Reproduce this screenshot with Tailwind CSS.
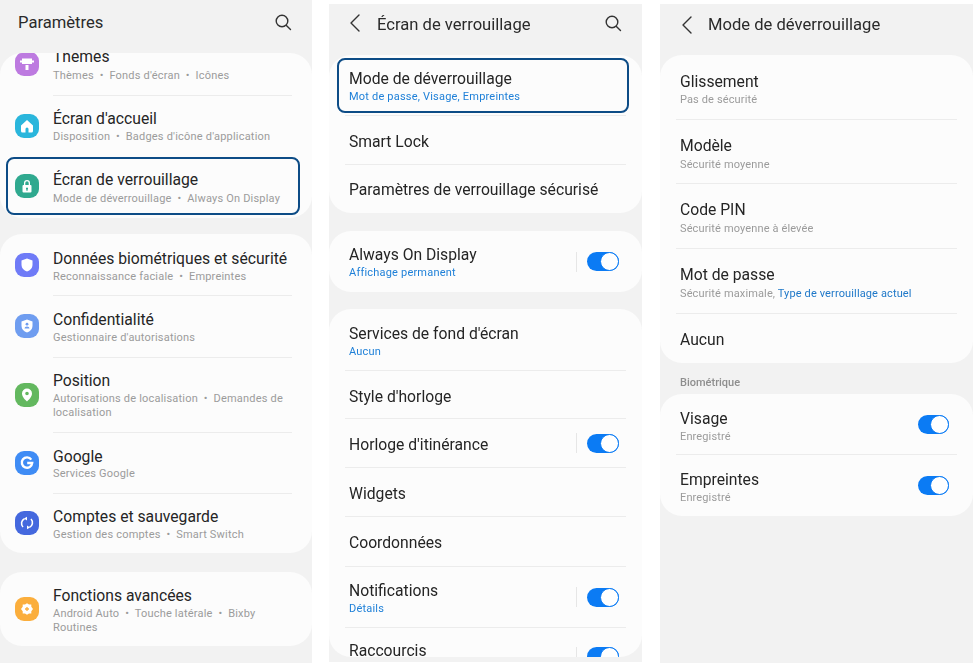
<!DOCTYPE html>
<html lang="fr">
<head>
    <meta charset="UTF-8">
    <title>Paramètres</title>
    <script src="https://cdn.jsdelivr.net/npm/@tailwindcss/browser@4"></script>
</head>
<body class="bg-white font-['Roboto',sans-serif] overflow-hidden">
<div class="flex w-[973px] h-[665px] items-start blur-[0.4px]">

    <!-- Paramètres -->
    <section class="w-[312px] h-[663px] bg-[#f2f2f2] overflow-hidden shrink-0">
        <header class="h-[53px] flex items-start justify-between pl-[18px] pr-[20px] pt-[11px]">
            <h1 class="text-[16.6px] leading-[24px] text-[#2a2a2a]">Paramètres</h1>
            <svg class="w-[18px] h-[18px] mt-[2px]" viewBox="0 0 18 18" fill="none" stroke="#333" stroke-width="1.4" stroke-linecap="round"><circle cx="8" cy="8" r="5.8"/><path d="M12.4 12.4 16.5 16.5"/></svg>
        </header>

        <div class="h-[165px] bg-[#fcfcfc] rounded-[22px] overflow-hidden">
            <div class="flex h-[42px] pl-[15px] -mt-[24px]">
                <div class="w-6 h-6 mt-[23px] mr-[14px] rounded-[9px] bg-[#bd7ae0] flex items-center justify-center shrink-0">
                    <svg class="w-4 h-4" viewBox="0 0 16 16" fill="#fff"><path d="M3 2.500h10v2H15v2h-2v1.500H3V6.500H1v-2h2zM6.500 9h3v5h-3z"/></svg>
                </div>
                <div class="flex-1 mr-[20px]"><div class="text-[15.7px] leading-[20px] text-[#252525] mt-[18px]">Thèmes</div><div class="mt-[1px] text-[11px] leading-[16px] tracking-[0.2px] text-[#9b9b9b]">Thèmes &nbsp;•&nbsp; Fonds d'écran &nbsp;•&nbsp; Icônes</div></div>
            </div>
            <div class="h-[24px]"></div>
            <div class="flex h-[62px] pl-[15px]">
                <div class="w-6 h-6 self-center mr-[14px] rounded-[9px] bg-[#2ab6dc] flex items-center justify-center shrink-0">
                    <svg class="w-4 h-4" viewBox="0 0 16 16" fill="#fff"><path fill-rule="evenodd" d="M8 2 14 7.500V13a1.500 1.500 0 0 1-1.500 1.500h-9A1.500 1.500 0 0 1 2 13V7.500zM6.500 14.500h3V11a1.500 1.500 0 0 0-3 0z"/></svg>
                </div>
                <div class="flex-1 mr-[20px] border-t border-[#ececec] pt-[13px]"><div class="text-[15.7px] leading-[20px] text-[#252525]">Écran d'accueil</div><div class="text-[11px] leading-[16px] tracking-[0.2px] text-[#9b9b9b]">Disposition &nbsp;•&nbsp; Badges d'icône d'application</div></div>
            </div>
            <div class="flex h-[58px] ml-[6px] mr-[12px] pl-[7px] border-2 border-[#0d4c86] rounded-[8px]">
                <div class="w-6 h-6 self-center mr-[14px] rounded-[9px] bg-[#2fa98f] flex items-center justify-center shrink-0">
                    <svg class="w-4 h-4" viewBox="0 0 16 16" fill="#fff"><path fill-rule="evenodd" d="M5 7V5a3 3 0 0 1 6 0v2h.5A1 1 0 0 1 12.500 8v5.500a1 1 0 0 1-1 1h-7a1 1 0 0 1-1-1V8a1 1 0 0 1 1-1zM6.300 7h3.400V5a1.700 1.700 0 0 0-3.400 0zM8 9.500a1.100 1.100 0 0 0-.6 2v1.200h1.200v-1.200a1.100 1.100 0 0 0-.6-2z"/></svg>
                </div>
                <div class="flex-1 pt-[11px]"><div class="text-[15.7px] leading-[20px] text-[#252525]">Écran de verrouillage</div><div class="mt-[1px] text-[11px] leading-[16px] tracking-[0.2px] text-[#9b9b9b]">Mode de déverrouillage &nbsp;•&nbsp; Always On Display</div></div>
            </div>
        </div>

        <div class="h-[319px] mt-[16px] bg-[#fcfcfc] rounded-[22px] overflow-hidden">
            <div class="flex h-[61px] pl-[15px]">
                <div class="w-6 h-6 self-center mr-[14px] rounded-[9px] bg-[#6f7bf7] flex items-center justify-center shrink-0">
                    <svg class="w-4 h-4" viewBox="0 0 16 16" fill="#fff"><path d="M8 1.500 13.500 3.500V8c0 3.300-2.300 5.500-5.500 6.500C4.800 13.500 2.500 11.300 2.500 8V3.500z"/></svg>
                </div>
                <div class="flex-1 mr-[20px] pt-[15px]"><div class="text-[15.7px] leading-[20px] text-[#252525] whitespace-nowrap">Données biométriques et sécurité</div><div class="text-[11px] leading-[16px] tracking-[0.2px] text-[#9b9b9b]">Reconnaissance faciale &nbsp;•&nbsp; Empreintes</div></div>
            </div>
            <div class="flex h-[62px] pl-[15px]">
                <div class="w-6 h-6 self-center mr-[14px] rounded-[9px] bg-[#6f9df0] flex items-center justify-center shrink-0">
                    <svg class="w-4 h-4" viewBox="0 0 16 16"><path fill="#fff" d="M8 1.500 13.500 3.500V8c0 3.300-2.300 5.500-5.500 6.500C4.800 13.500 2.500 11.300 2.500 8V3.500z"/><circle cx="8" cy="6.200" r="1.400" fill="#6f9df0"/><path fill="#6f9df0" d="M5.500 10.500a2.500 2 0 0 1 5 0z"/></svg>
                </div>
                <div class="flex-1 mr-[20px] border-t border-[#ececec] pt-[14px]"><div class="text-[15.7px] leading-[20px] text-[#252525]">Confidentialité</div><div class="text-[11px] leading-[16px] tracking-[0.2px] text-[#9b9b9b]">Gestionnaire d'autorisations</div></div>
            </div>
            <div class="flex h-[75px] pl-[15px]">
                <div class="w-6 h-6 self-center mr-[14px] rounded-[9px] bg-[#63b85f] flex items-center justify-center shrink-0">
                    <svg class="w-4 h-4" viewBox="0 0 16 16"><path fill="#fff" fill-rule="evenodd" d="M8 1.500a5 5 0 0 1 5 5c0 3.300-3.300 6.400-5 8-1.700-1.600-5-4.700-5-8a5 5 0 0 1 5-5zM8 4.700a1.800 1.800 0 1 0 0 3.600 1.800 1.800 0 0 0 0-3.600z"/></svg>
                </div>
                <div class="flex-1 mr-[20px] border-t border-[#ececec] pt-[13px]"><div class="text-[15.7px] leading-[20px] text-[#252525]">Position</div><div class="pt-[1px] text-[11px] leading-[14px] tracking-[0.2px] text-[#9b9b9b]">Autorisations de localisation &nbsp;•&nbsp; Demandes de localisation</div></div>
            </div>
            <div class="flex h-[61px] pl-[15px]">
                <div class="w-6 h-6 self-center mr-[14px] rounded-[9px] bg-[#3f8cf5] flex items-center justify-center shrink-0">
                    <svg class="w-4 h-4" viewBox="0 0 16 16" fill="none" stroke="#fff" stroke-width="2.400"><path d="M12.300 4.600A5.200 5.200 0 1 0 13.200 8H8.200"/></svg>
                </div>
                <div class="flex-1 mr-[20px] border-t border-[#ececec] pt-[14px]"><div class="text-[15.7px] leading-[20px] text-[#252525]">Google</div><div class="-mt-[1px] text-[11px] leading-[16px] tracking-[0.2px] text-[#9b9b9b]">Services Google</div></div>
            </div>
            <div class="flex h-[60px] pl-[15px]">
                <div class="w-6 h-6 self-center mr-[14px] rounded-[9px] bg-[#4468de] flex items-center justify-center shrink-0">
                    <svg class="w-4 h-4" viewBox="0 0 16 16" fill="none" stroke="#fff" stroke-width="1.600"><path d="M4 12a5.200 5.200 0 0 1 1.500-8.300M12 4a5.200 5.200 0 0 1-1.500 8.300"/><path fill="#fff" stroke="none" d="M8 1.800v3.600L5 3.600zM8 14.200v-3.600l3 1.800z"/></svg>
                </div>
                <div class="flex-1 mr-[20px] border-t border-[#ececec] pt-[13px]"><div class="text-[15.7px] leading-[20px] text-[#252525]">Comptes et sauvegarde</div><div class="text-[11px] leading-[16px] tracking-[0.2px] text-[#9b9b9b]">Gestion des comptes &nbsp;•&nbsp; Smart Switch</div></div>
            </div>
        </div>

        <div class="flex h-[74px] mt-[19px] pl-[15px] bg-[#fcfcfc] rounded-[22px]">
            <div class="w-6 h-6 self-center mr-[14px] rounded-[9px] bg-[#fbae3c] flex items-center justify-center shrink-0">
                <svg class="w-4 h-4" viewBox="0 0 16 16"><path fill="#fff" d="M8 2.200 10 3.500h2.300v2.300L14 8l-1.700 2.200v2.300H10L8 13.800 6 12.500H3.700v-2.300L2 8l1.700-2.200V3.500H6z"/><path stroke="#fbae3c" stroke-width="1.300" d="M8 6v4M6 8h4"/></svg>
            </div>
            <div class="flex-1 mr-[20px] pt-[14px]"><div class="text-[15.7px] leading-[20px] text-[#252525]">Fonctions avancées</div><div class="text-[11px] leading-[14px] pt-[1px] tracking-[0.2px] text-[#9b9b9b]">Android Auto &nbsp;•&nbsp; Touche latérale &nbsp;•&nbsp; Bixby Routines</div></div>
        </div>
    </section>

    <!-- Écran de verrouillage -->
    <section class="w-[313px] h-[658px] mt-[4px] ml-[17px] bg-[#f2f2f2] overflow-hidden shrink-0">
        <header class="h-[51px] flex items-start pl-[21px] pr-[20px] pt-[9px]">
            <svg class="w-[10px] h-[18px] mt-[1px]" viewBox="0 0 10 18" fill="none" stroke="#333" stroke-width="1.400" stroke-linecap="round" stroke-linejoin="round"><path d="M9 1 1 9l8 8"/></svg>
            <h1 class="ml-[17px] flex-1 text-[16.6px] leading-[24px] text-[#2a2a2a]">Écran de verrouillage</h1>
            <svg class="w-[18px] h-[18px] mt-[1px]" viewBox="0 0 18 18" fill="none" stroke="#333" stroke-width="1.400" stroke-linecap="round"><circle cx="8" cy="8" r="5.800"/><path d="M12.400 12.400 16.500 16.500"/></svg>
        </header>

        <div class="h-[158px] bg-[#fcfcfc] rounded-[22px] overflow-hidden pt-[3px]">
            <div class="h-[55px] ml-[8px] mr-[13px] pl-[10px] pt-[9px] border-2 border-[#0d4c86] rounded-[8px]"><div class="text-[15.7px] leading-[20px] text-[#252525]">Mode de déverrouillage</div><div class="text-[11px] leading-[16px] tracking-[0.2px] text-[#1f80d8]">Mot de passe, Visage, Empreintes</div></div>
            <div class="h-[50px] mt-[2px] mx-[16px] px-[4px] pt-[3px] flex items-center border-y border-y-[#ececec] text-[15.7px] text-[#252525]">Smart Lock</div>
            <div class="h-[48px] mx-[16px] px-[4px] pt-[2px] flex items-center text-[15.7px] text-[#252525]">Paramètres de verrouillage sécurisé</div>
        </div>

        <div class="h-[61px] mt-[18px] pl-[20px] pr-[23px] bg-[#fcfcfc] rounded-[22px] flex items-center">
            <div class="flex-1 pt-[3px]"><div class="text-[15.7px] leading-[20px] text-[#252525]">Always On Display</div><div class="text-[11px] leading-[16px] tracking-[0.2px] text-[#1f80d8]">Affichage permanent</div></div>
            <div class="w-px h-[20px] bg-[#e6e6e6] mr-[10px]"></div>
            <div class="w-[32px] h-[19px] rounded-full bg-[#0b7bf4] flex justify-end"><div class="w-[19px] h-[19px] rounded-full bg-white border border-[#0b7bf4]"></div></div>
        </div>

        <div class="h-[348px] mt-[17px] bg-[#fcfcfc] rounded-[22px] overflow-hidden px-[16px]">
            <div class="h-[62px] px-[4px] pt-[15px] border-b border-[#ececec]"><div class="text-[15.7px] leading-[20px] text-[#252525]">Services de fond d'écran</div><div class="text-[11px] leading-[16px] tracking-[0.2px] text-[#1f80d8]">Aucun</div></div>
            <div class="h-[48px] px-[4px] pt-[4px] flex items-center border-b border-[#ececec] text-[15.7px] text-[#252525]">Style d'horloge</div>
            <div class="h-[49px] pl-[4px] pr-[7px] flex items-center border-b border-[#ececec] text-[15.7px] text-[#252525]">
                <span class="flex-1 pt-[4px]">Horloge d'itinérance</span>
                <div class="w-px h-[20px] bg-[#e6e6e6] mr-[10px]"></div>
                <div class="w-[32px] h-[19px] rounded-full bg-[#0b7bf4] flex justify-end"><div class="w-[19px] h-[19px] rounded-full bg-white border border-[#0b7bf4]"></div></div>
            </div>
            <div class="h-[49px] px-[4px] pt-[4px] flex items-center border-b border-[#ececec] text-[15.7px] text-[#252525]">Widgets</div>
            <div class="h-[50px] px-[4px] pt-[2px] flex items-center border-b border-[#ececec] text-[15.7px] text-[#252525]">Coordonnées</div>
            <div class="h-[61px] pl-[4px] pr-[7px] flex items-center border-b border-[#ececec]">
                <div class="flex-1 pt-[4px]"><div class="text-[15.7px] leading-[20px] text-[#252525]">Notifications</div><div class="text-[11px] leading-[16px] tracking-[0.2px] text-[#1f80d8]">Détails</div></div>
                <div class="w-px h-[20px] bg-[#e6e6e6] mr-[10px]"></div>
                <div class="w-[32px] h-[19px] rounded-full bg-[#0b7bf4] flex justify-end"><div class="w-[19px] h-[19px] rounded-full bg-white border border-[#0b7bf4]"></div></div>
            </div>
            <div class="h-[29px] pl-[4px] pr-[7px] pt-[16px] flex items-start text-[15.7px] leading-[12px] text-[#252525]">
                <span class="flex-1 pt-[1px]">Raccourcis</span>
                <div class="w-px h-[20px] mt-[3px] bg-[#e6e6e6] mr-[10px]"></div>
                <div class="w-[32px] h-[19px] mt-[3px] rounded-full bg-[#0b7bf4] flex justify-end shrink-0"><div class="w-[19px] h-[19px] rounded-full bg-white border border-[#0b7bf4]"></div></div>
            </div>
        </div>
    </section>

    <!-- Mode de déverrouillage -->
    <section class="w-[313px] h-[659px] mt-[4px] ml-[18px] bg-[#f2f2f2] overflow-hidden shrink-0">
        <header class="h-[51px] flex items-start pl-[22px] pt-[9px]">
            <svg class="w-[10px] h-[18px] mt-[3px]" viewBox="0 0 10 18" fill="none" stroke="#333" stroke-width="1.400" stroke-linecap="round" stroke-linejoin="round"><path d="M9 1 1 9l8 8"/></svg>
            <h1 class="ml-[16px] text-[16.6px] leading-[24px] text-[#2a2a2a]">Mode de déverrouillage</h1>
        </header>

        <div class="h-[308px] bg-[#fcfcfc] rounded-[22px] overflow-hidden px-[16px]">
            <div class="h-[65px] px-[4px] pt-[17px] border-b border-[#ececec]"><div class="text-[15.7px] leading-[20px] text-[#252525]">Glissement</div><div class="text-[11px] leading-[16px] tracking-[0.13px] text-[#9b9b9b]">Pas de sécurité</div></div>
            <div class="h-[64px] px-[4px] pt-[16px] border-b border-[#ececec]"><div class="text-[15.7px] leading-[20px] text-[#252525]">Modèle</div><div class="mt-[1px] text-[11px] leading-[16px] tracking-[0.13px] text-[#9b9b9b]">Sécurité moyenne</div></div>
            <div class="h-[65px] px-[4px] pt-[16px] border-b border-[#ececec]"><div class="text-[15.7px] leading-[20px] text-[#252525]">Code PIN</div><div class="mt-[1px] text-[11px] leading-[16px] tracking-[0.13px] text-[#9b9b9b]">Sécurité moyenne à élevée</div></div>
            <div class="h-[65px] px-[4px] pt-[16px] border-b border-[#ececec]"><div class="text-[15.7px] leading-[20px] text-[#252525]">Mot de passe</div><div class="mt-[1px] text-[11px] leading-[16px] tracking-[0.13px] text-[#9b9b9b]">Sécurité maximale, <span class="text-[#1f78c8]">Type de verrouillage actuel</span></div></div>
            <div class="h-[49px] px-[4px] pt-[2px] flex items-center text-[15.7px] text-[#252525]">Aucun</div>
        </div>

        <div class="h-[31px] pl-[20px] pt-[12px] text-[11px] leading-[16px] font-medium text-[#8e8e8e]">Biométrique</div>

        <div class="h-[122px] bg-[#fcfcfc] rounded-[22px] overflow-hidden px-[16px]">
            <div class="h-[61px] pl-[4px] pr-[8px] flex items-center border-b border-[#ececec]">
                <div class="flex-1 pt-[6px]"><div class="text-[15.7px] leading-[20px] text-[#252525]">Visage</div><div class="text-[11px] leading-[16px] tracking-[0.13px] text-[#9b9b9b]">Enregistré</div></div>
                <div class="w-[31px] h-[19px] rounded-full bg-[#0b7bf4] flex justify-end"><div class="w-[19px] h-[19px] rounded-full bg-white border border-[#0b7bf4]"></div></div>
            </div>
            <div class="h-[61px] pl-[4px] pr-[8px] flex items-center">
                <div class="flex-1 pt-[4px]"><div class="text-[15.7px] leading-[20px] text-[#252525]">Empreintes</div><div class="text-[11px] leading-[16px] tracking-[0.13px] text-[#9b9b9b]">Enregistré</div></div>
                <div class="w-[31px] h-[19px] rounded-full bg-[#0b7bf4] flex justify-end"><div class="w-[19px] h-[19px] rounded-full bg-white border border-[#0b7bf4]"></div></div>
            </div>
        </div>
    </section>

</div>
</body>
</html>
